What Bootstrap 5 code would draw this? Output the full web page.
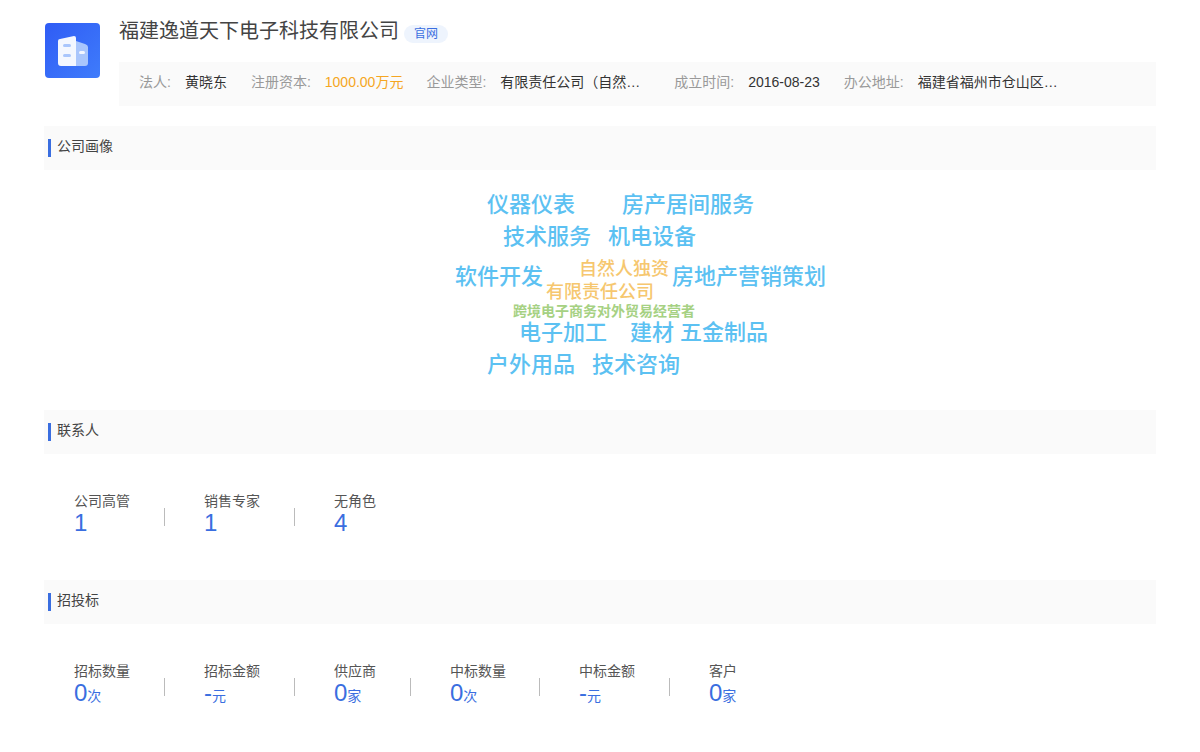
<!DOCTYPE html>
<html lang="zh"><head><meta charset="utf-8"><title>公司</title>
<link href="https://cdn.jsdelivr.net/npm/bootstrap@5.3.0/dist/css/bootstrap.min.css" rel="stylesheet">
<style>
html,body{height:100%;}
body{font-family:"Liberation Sans","Noto Sans CJK SC",sans-serif;font-size:14px;color:#333;background:#fff;overflow:hidden;}
.pg{padding:17px 44px 0 44px;width:1200px;}
.logo-box{width:55px;height:55px;margin-left:1px;margin-top:6px;border-radius:4px;background:linear-gradient(135deg,#2f5cf5,#3f7cfb);flex:none;}
.head-main{margin-left:19px;width:1037px;}
.co-name{font-size:20px;line-height:28px;color:#444;font-weight:400;margin:0;}
.tag-site{font-size:12px;line-height:18px;height:18px;width:44px;text-align:center;border-radius:9px;background:#eef4fd;color:#3a6ee0;margin-left:5px;margin-top:8px;}
.info-bar{background:#fafafa;height:44px;margin-top:17px;padding-left:20px;line-height:40px;}
.info-k{color:#999;margin-right:14px;white-space:nowrap;}
.info-v{color:#333;margin-right:24px;white-space:nowrap;}
.info-gold{color:#f5a623;margin-right:23px;}
.trunc{width:141px;}
.trunc-a{margin-right:33px;}
.mt-head{margin-top:20px;}
.sec-h{background:#fafafa;height:44px;padding-left:4px;padding-top:13px;line-height:14px;color:#444;}
.sec-bar{width:3px;height:18px;background:#3a6ee0;margin-right:6px;flex:none;}
.sec-t{line-height:14px;}
.cloud{position:relative;height:240px;}
.cw{position:absolute;white-space:nowrap;line-height:1;font-weight:500;}
.c-b{font-size:22px;color:#5cc1f2;}
.c-o{font-size:18px;color:#f6c76f;}
.c-g{font-size:14px;color:#a6d183;font-weight:700;}
.stats{padding-left:30px;height:126px;padding-top:39px;}
.st-item{padding-right:34px;}
.st-tight{padding-right:33px;}
.st-sep{width:1px;height:18px;background:#bbb;margin-right:39px;margin-top:15px;flex:none;}
.st-l{line-height:16px;color:#555;white-space:nowrap;}
.st-v{color:#3a6ee0;font-size:24px;line-height:28px;white-space:nowrap;}
.st-u{font-size:14px;}
</style></head>
<body>
<div class="pg">
  <div class="d-flex">
    <div class="logo-box d-flex align-items-center justify-content-center">
      <svg width="30" height="30" viewBox="0 0 30 30">
        <path d="M18 5L27 8Q30 9 30 11V27Q30 30 27 30H18Z" fill="#a9c6fc"/>
        <path d="M0 5Q0 3 2 3L16 0Q18 0 18 2V30H3Q0 30 0 27Z" fill="#f3f7ff"/>
        <rect x="5" y="8" width="8" height="3" rx="1.5" fill="#a9c6fc"/>
        <rect x="5" y="18" width="8" height="3" rx="1.5" fill="#a9c6fc"/>
        <rect x="21" y="15" width="6" height="3" rx="1.5" fill="#f3f7ff"/>
      </svg>
    </div>
    <div class="head-main">
      <div class="d-flex"><h1 class="co-name">福建逸道天下电子科技有限公司</h1><div class="tag-site">官网</div></div>
      <div class="info-bar d-flex">
        <span class="info-k">法人:</span><span class="info-v">黄晓东</span>
        <span class="info-k">注册资本:</span><span class="info-v info-gold">1000.00万元</span>
        <span class="info-k">企业类型:</span><span class="info-v trunc trunc-a">有限责任公司（自然…</span>
        <span class="info-k">成立时间:</span><span class="info-v">2016-08-23</span>
        <span class="info-k">办公地址:</span><span class="info-v trunc">福建省福州市仓山区…</span>
      </div>
    </div>
  </div>

  <div class="sec-h d-flex align-items-start mt-head"><span class="sec-bar"></span><span class="sec-t">公司画像</span></div>
  <div class="cloud">
    <span class="cw c-b" style="left:443px;top:24px">仪器仪表</span>
    <span class="cw c-b" style="left:578px;top:24px">房产居间服务</span>
    <span class="cw c-b" style="left:459px;top:56px">技术服务</span>
    <span class="cw c-b" style="left:564px;top:56px">机电设备</span>
    <span class="cw c-b" style="left:411px;top:96px">软件开发</span>
    <span class="cw c-o" style="left:535px;top:90px">自然人独资</span>
    <span class="cw c-b" style="left:628px;top:96px">房地产营销策划</span>
    <span class="cw c-o" style="left:502px;top:113px">有限责任公司</span>
    <span class="cw c-g" style="left:469px;top:134px">跨境电子商务对外贸易经营者</span>
    <span class="cw c-b" style="left:475px;top:152px">电子加工</span>
    <span class="cw c-b" style="left:586px;top:152px">建材</span>
    <span class="cw c-b" style="left:636px;top:152px">五金制品</span>
    <span class="cw c-b" style="left:443px;top:184px">户外用品</span>
    <span class="cw c-b" style="left:548px;top:184px">技术咨询</span>
  </div>

  <div class="sec-h d-flex align-items-start"><span class="sec-bar"></span><span class="sec-t">联系人</span></div>
  <div class="stats d-flex">
    <div class="st-item"><div class="st-l">公司高管</div><div class="st-v">1</div></div><span class="st-sep"></span>
    <div class="st-item"><div class="st-l">销售专家</div><div class="st-v">1</div></div><span class="st-sep"></span>
    <div class="st-item"><div class="st-l">无角色</div><div class="st-v">4</div></div>
  </div>

  <div class="sec-h d-flex align-items-start"><span class="sec-bar"></span><span class="sec-t">招投标</span></div>
  <div class="stats d-flex">
    <div class="st-item"><div class="st-l">招标数量</div><div class="st-v">0<span class="st-u">次</span></div></div><span class="st-sep"></span>
    <div class="st-item"><div class="st-l">招标金额</div><div class="st-v">-<span class="st-u">元</span></div></div><span class="st-sep"></span>
    <div class="st-item"><div class="st-l">供应商</div><div class="st-v">0<span class="st-u">家</span></div></div><span class="st-sep"></span>
    <div class="st-item st-tight"><div class="st-l">中标数量</div><div class="st-v">0<span class="st-u">次</span></div></div><span class="st-sep"></span>
    <div class="st-item"><div class="st-l">中标金额</div><div class="st-v">-<span class="st-u">元</span></div></div><span class="st-sep"></span>
    <div class="st-item"><div class="st-l">客户</div><div class="st-v">0<span class="st-u">家</span></div></div>
  </div>
</div>
<script src="https://cdn.jsdelivr.net/npm/bootstrap@5.3.0/dist/js/bootstrap.bundle.min.js"></script>
</body></html>
